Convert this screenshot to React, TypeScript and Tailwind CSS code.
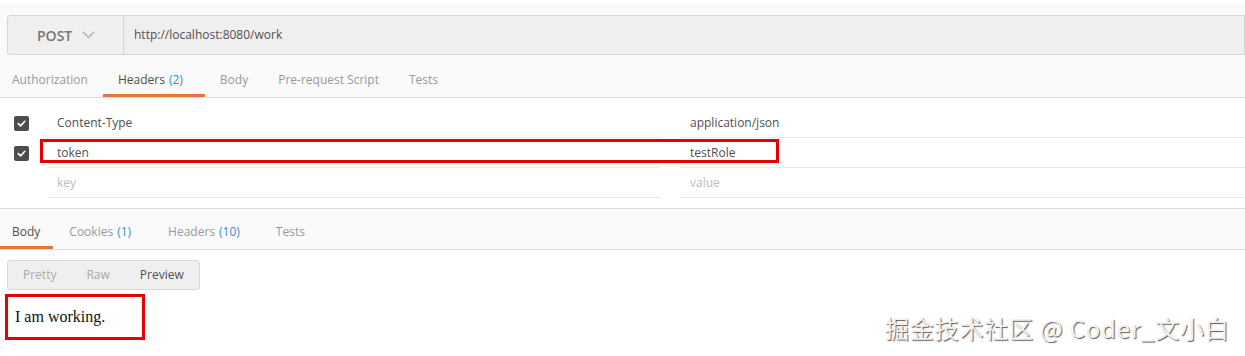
import React from "react";

const Checkbox: React.FC = () => (
    <div className="w-[15px] h-[15px] rounded-[2px] bg-[#4d4d4d] flex items-center justify-center">
        <svg width="11" height="11" viewBox="0 0 12 12" fill="none">
            <path d="M2.5 6.2 L5 8.6 L9.6 3.6" stroke="#ffffff" strokeWidth="1.8" strokeLinecap="round" strokeLinejoin="round" />
        </svg>
    </div>
);

type Row = { key: string; value: string; checked: boolean; placeholder?: boolean };

const rows: Row[] = [
    { key: "Content-Type", value: "application/json", checked: true },
    { key: "token", value: "testRole", checked: true },
    { key: "key", value: "value", checked: false, placeholder: true },
];

const App: React.FC = () => {
    return (
        <div className="relative w-[1245px] h-[356px] bg-white overflow-hidden font-['Open_Sans',sans-serif] text-[12px] text-[#505050]">
            {/* request bar */}
            <div className="mt-[4px] bg-[#fafafa] pt-[11px]">
                <div className="ml-[7px] h-[40px] flex border border-[#d6d6d6] rounded-l-[3px] bg-[#efefef]">
                    <div className="w-[116px] flex items-center pl-[29px] border-r border-[#d6d6d6]">
                        <span className="text-[14px] font-semibold text-[#777777]">POST</span>
                        <svg className="ml-[10px]" width="13" height="8" viewBox="0 0 13 8" fill="none">
                            <path d="M1 1 L6.5 6.5 L12 1" stroke="#a8a8a8" strokeWidth="1.2" />
                        </svg>
                    </div>
                    <div className="flex items-center pl-[10px] text-[#505050]">http://localhost:8080/work</div>
                </div>
                <div className="h-[43px] flex border-b border-[#dcdcdc]">
                    <div className="pl-[12px] pr-[15px] pt-[8px] flex items-center text-[#999999]">Authorization</div>
                    <div className="relative pl-[15px] pr-[22px] pt-[8px] flex items-center text-[#505050]">
                        Headers <span className="ml-[4px] text-[#3b8ed4]">(2)</span>
                        <div className="absolute left-0 right-0 bottom-0 h-[3px] bg-[#e8743b]" />
                    </div>
                    <div className="px-[15px] pt-[8px] flex items-center text-[#999999]">Body</div>
                    <div className="px-[15px] pt-[8px] flex items-center text-[#999999]">Pre-request Script</div>
                    <div className="px-[15px] pt-[8px] flex items-center text-[#999999]">Tests</div>
                </div>
            </div>

            {/* header table */}
            <div className="relative pt-[10px] pb-[10px] border-b border-[#dcdcdc]">
                {rows.map((r) => (
                    <div key={r.key} className="flex h-[30px]">
                        <div className="w-[48px] flex items-center pl-[14px]">{r.checked && <Checkbox />}</div>
                        <div className={`w-[612px] flex items-center pl-[9px] border-b border-[#e8e8e8] ${r.placeholder ? "text-[#bbbbbb]" : "text-[#505050]"}`}>
                            {r.key}
                        </div>
                        <div className="w-[20px]" />
                        <div className={`flex-1 flex items-center pl-[10px] border-b border-[#e8e8e8] ${r.placeholder ? "text-[#bbbbbb]" : "text-[#505050]"}`}>
                            {r.value}
                        </div>
                    </div>
                ))}
                <div className="absolute left-[40px] top-[41px] w-[739px] h-[24px] border-[3px] border-[#e60000]" />
            </div>

            {/* response tabs */}
            <div className="h-[41px] flex border-b border-[#dcdcdc] bg-[#fafafa]">
                <div className="relative pl-[12px] pr-[13px] pt-[6px] flex items-center text-[#505050]">
                    Body
                    <div className="absolute left-0 right-0 bottom-0 h-[3px] bg-[#e8743b]" />
                </div>
                <div className="pl-[16px] pr-[20px] pt-[6px] flex items-center text-[#999999]">
                    Cookies <span className="ml-[4px] text-[#3b8ed4]">(1)</span>
                </div>
                <div className="pl-[17px] pr-[18px] pt-[6px] flex items-center text-[#999999]">
                    Headers <span className="ml-[4px] text-[#3b8ed4]">(10)</span>
                </div>
                <div className="pl-[18px] pr-[17px] pt-[6px] flex items-center text-[#999999]">Tests</div>
            </div>

            <div className="pl-[7px] pt-[10px]">
                <div className="inline-flex h-[30px] border border-[#d9d9d9] rounded-[3px] bg-[#efefef]">
                    <div className="px-[15px] flex items-center text-[#aaaaaa]">Pretty</div>
                    <div className="px-[15px] flex items-center text-[#aaaaaa]">Raw</div>
                    <div className="px-[15px] flex items-center text-[#505050]">Preview</div>
                </div>
            </div>

            <div className="ml-[5px] mt-[4px] w-[140px] h-[46px] border-[3px] border-[#e60000] flex items-center pl-[7px] font-['Liberation_Serif',serif] text-[16px] text-[#111111]">
                I am working.
            </div>

            {/* watermark */}
            <div className="absolute left-[885px] top-[312px] font-['Noto_Sans_CJK_SC',sans-serif] text-[24px] leading-[32px] tracking-[0.8px] text-[#f2f2f2] [text-shadow:1px_1px_1px_#5a5a5a]">
                掘金技术社区 @ Coder_文小白
            </div>
        </div>
    );
};

export default App;
